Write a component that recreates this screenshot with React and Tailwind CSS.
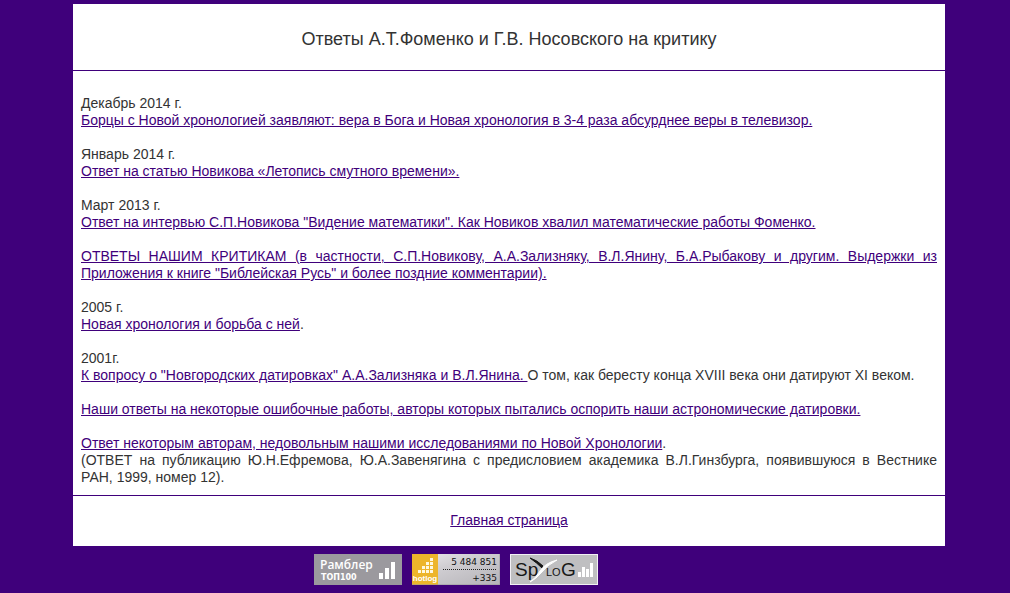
function TextLink({ children }) {
  return (
    <a href="#" className="text-[#3f007b] underline">
      {children}
    </a>
  );
}

function RamblerIcon() {
  return (
    <svg viewBox="0 0 88 31" className="block h-[31px] w-[88px]" role="img" aria-label="Рамблер ТОП100">
      <rect width="88" height="31" fill="#9b999e" />
      <text x="6" y="15" fontFamily="'Open Sans', sans-serif" fontWeight="600" fontSize="12" fill="#fff">Рамблер</text>
      <text x="7" y="26" fontFamily="'DejaVu Sans', sans-serif" fontWeight="700" fontSize="8" fill="#fff">ТОП100</text>
      <path d="M65 19h4v6h-4zM71 14h4v11h-4zM77 8h4v17h-4z" fill="#fff" />
    </svg>
  );
}

function HotlogIcon() {
  return (
    <svg viewBox="0 0 88 31" className="block h-[31px] w-[88px]" role="img" aria-label="hotlog 5 484 851 +335">
      <defs>
        <linearGradient id="hotlog-silver" x1="0" y1="0" x2="1" y2="1">
          <stop offset="0" stopColor="#eeecef" />
          <stop offset="0.4" stopColor="#cfcdd1" />
          <stop offset="1" stopColor="#b5b3b8" />
        </linearGradient>
      </defs>
      <rect width="88" height="31" fill="url(#hotlog-silver)" />
      <rect width="26" height="31" fill="#edb52b" />
      <path d="M6 16h3v3H6zM10 16h3v3h-3zM14 16h3v3h-3zM18 16h3v3h-3zM10 12h3v3h-3zM14 12h3v3h-3zM18 12h3v3h-3zM14 8h3v3h-3zM18 8h3v3h-3zM18 4h3v3h-3z" fill="#fff8df" />
      <text x="13" y="27" textAnchor="middle" fontFamily="'Liberation Sans', Arial, sans-serif" fontSize="8" fontWeight="700" fill="#fff">hotlog</text>
      <text x="85" y="11" textAnchor="end" fontFamily="'DejaVu Sans', sans-serif" fontSize="9" fill="#111">5 484 851</text>
      <path d="M31 15.5H85" stroke="#222" strokeDasharray="1 1" />
      <text x="85" y="27" textAnchor="end" fontFamily="'DejaVu Sans', sans-serif" fontSize="9" fill="#111">+335</text>
      <path d="M0 30.5H88M87.500 0V31" stroke="#99979c" strokeOpacity="0.5" />
    </svg>
  );
}

function SpylogIcon() {
  return (
    <svg viewBox="0 0 88 31" className="block h-[31px] w-[88px]" role="img" aria-label="SpyLOG">
      <rect x="0.5" y="0.5" width="87" height="30" fill="#bfbfc1" stroke="#f2f0f4" />
      <text x="5" y="22" fontFamily="'Liberation Sans', Arial, sans-serif" fontSize="19" fill="#171717">Sp</text>
      <path d="M20 4Q27 6 33 12L32 14Q27 9 20 4Z" fill="#171717" stroke="#171717" />
      <path d="M47 6Q35 9 30 17Q26 24 20 28Q26 25 31 19Q37 11 47 6Z" fill="#fff" stroke="#fff" />
      <text x="36" y="22" fontFamily="'Liberation Sans', Arial, sans-serif" fontSize="11" fill="#171717">LO</text>
      <text x="51" y="22" fontFamily="'Liberation Sans', Arial, sans-serif" fontSize="19" fill="#171717">G</text>
      <path d="M68 18h3v5h-3zM72 13h3v10h-3zM76 15h3v8h-3zM80 9h3v14h-3z" fill="#fff" />
    </svg>
  );
}

export default function App() {
  return (
    <div className="min-h-screen bg-[#3f007b] pt-1 pr-[65px] pb-2 pl-[73px] font-['Liberation_Sans',Arial,sans-serif] text-sm leading-[17px] text-[#333]">
      <div className="bg-white">
        <header className="border-b border-[#3f007b] px-2 pt-6 pb-5 text-center">
          <h1 className="text-lg leading-[22px]">Ответы А.Т.Фоменко и Г.В. Носовского на критику</h1>
        </header>

        <main className="flex flex-col gap-[17px] px-2 pt-6 pb-[9px] text-justify">
          <p>
            Декабрь 2014 г.
            <br />
            <TextLink>Борцы с Новой хронологией заявляют: вера в Бога и Новая хронология в 3-4 раза абсурднее веры в телевизор.</TextLink>
          </p>
          <p>
            Январь 2014 г.
            <br />
            <TextLink>Ответ на статью Новикова «Летопись смутного времени».</TextLink>
          </p>
          <p>
            Март 2013 г.
            <br />
            <TextLink>Ответ на интервью С.П.Новикова "Видение математики". Как Новиков хвалил математические работы Фоменко.</TextLink>
          </p>
          <p>
            <TextLink>ОТВЕТЫ НАШИМ КРИТИКАМ (в частности, С.П.Новикову, А.А.Зализняку, В.Л.Янину, Б.А.Рыбакову и другим. Выдержки из Приложения к книге "Библейская Русь" и более поздние комментарии).</TextLink>
          </p>
          <p>
            2005 г.
            <br />
            <TextLink>Новая хронология и борьба с ней</TextLink>.
          </p>
          <p>
            2001г.
            <br />
            <TextLink>К вопросу о "Новгородских датировках" А.А.Зализняка и В.Л.Янина. </TextLink>
            О том, как бересту конца XVIII века они датируют XI веком.
          </p>
          <p>
            <TextLink>Наши ответы на некоторые ошибочные работы, авторы которых пытались оспорить наши астрономические датировки.</TextLink>
          </p>
          <p>
            <TextLink>Ответ некоторым авторам, недовольным нашими исследованиями по Новой Хронологии</TextLink>.
            <br />
            (ОТВЕТ на публикацию Ю.Н.Ефремова, Ю.А.Завенягина с предисловием академика В.Л.Гинзбурга, появившуюся в Вестнике РАН, 1999, номер 12).
          </p>
        </main>

        <nav className="border-t border-[#3f007b] px-2 pt-4 pb-[17px] text-center">
          <TextLink>Главная страница</TextLink>
        </nav>
      </div>

      <footer className="flex justify-center gap-[10px] pt-2 pr-[106px]">
        <a href="#"><RamblerIcon /></a>
        <a href="#"><HotlogIcon /></a>
        <a href="#"><SpylogIcon /></a>
      </footer>
    </div>
  );
}
